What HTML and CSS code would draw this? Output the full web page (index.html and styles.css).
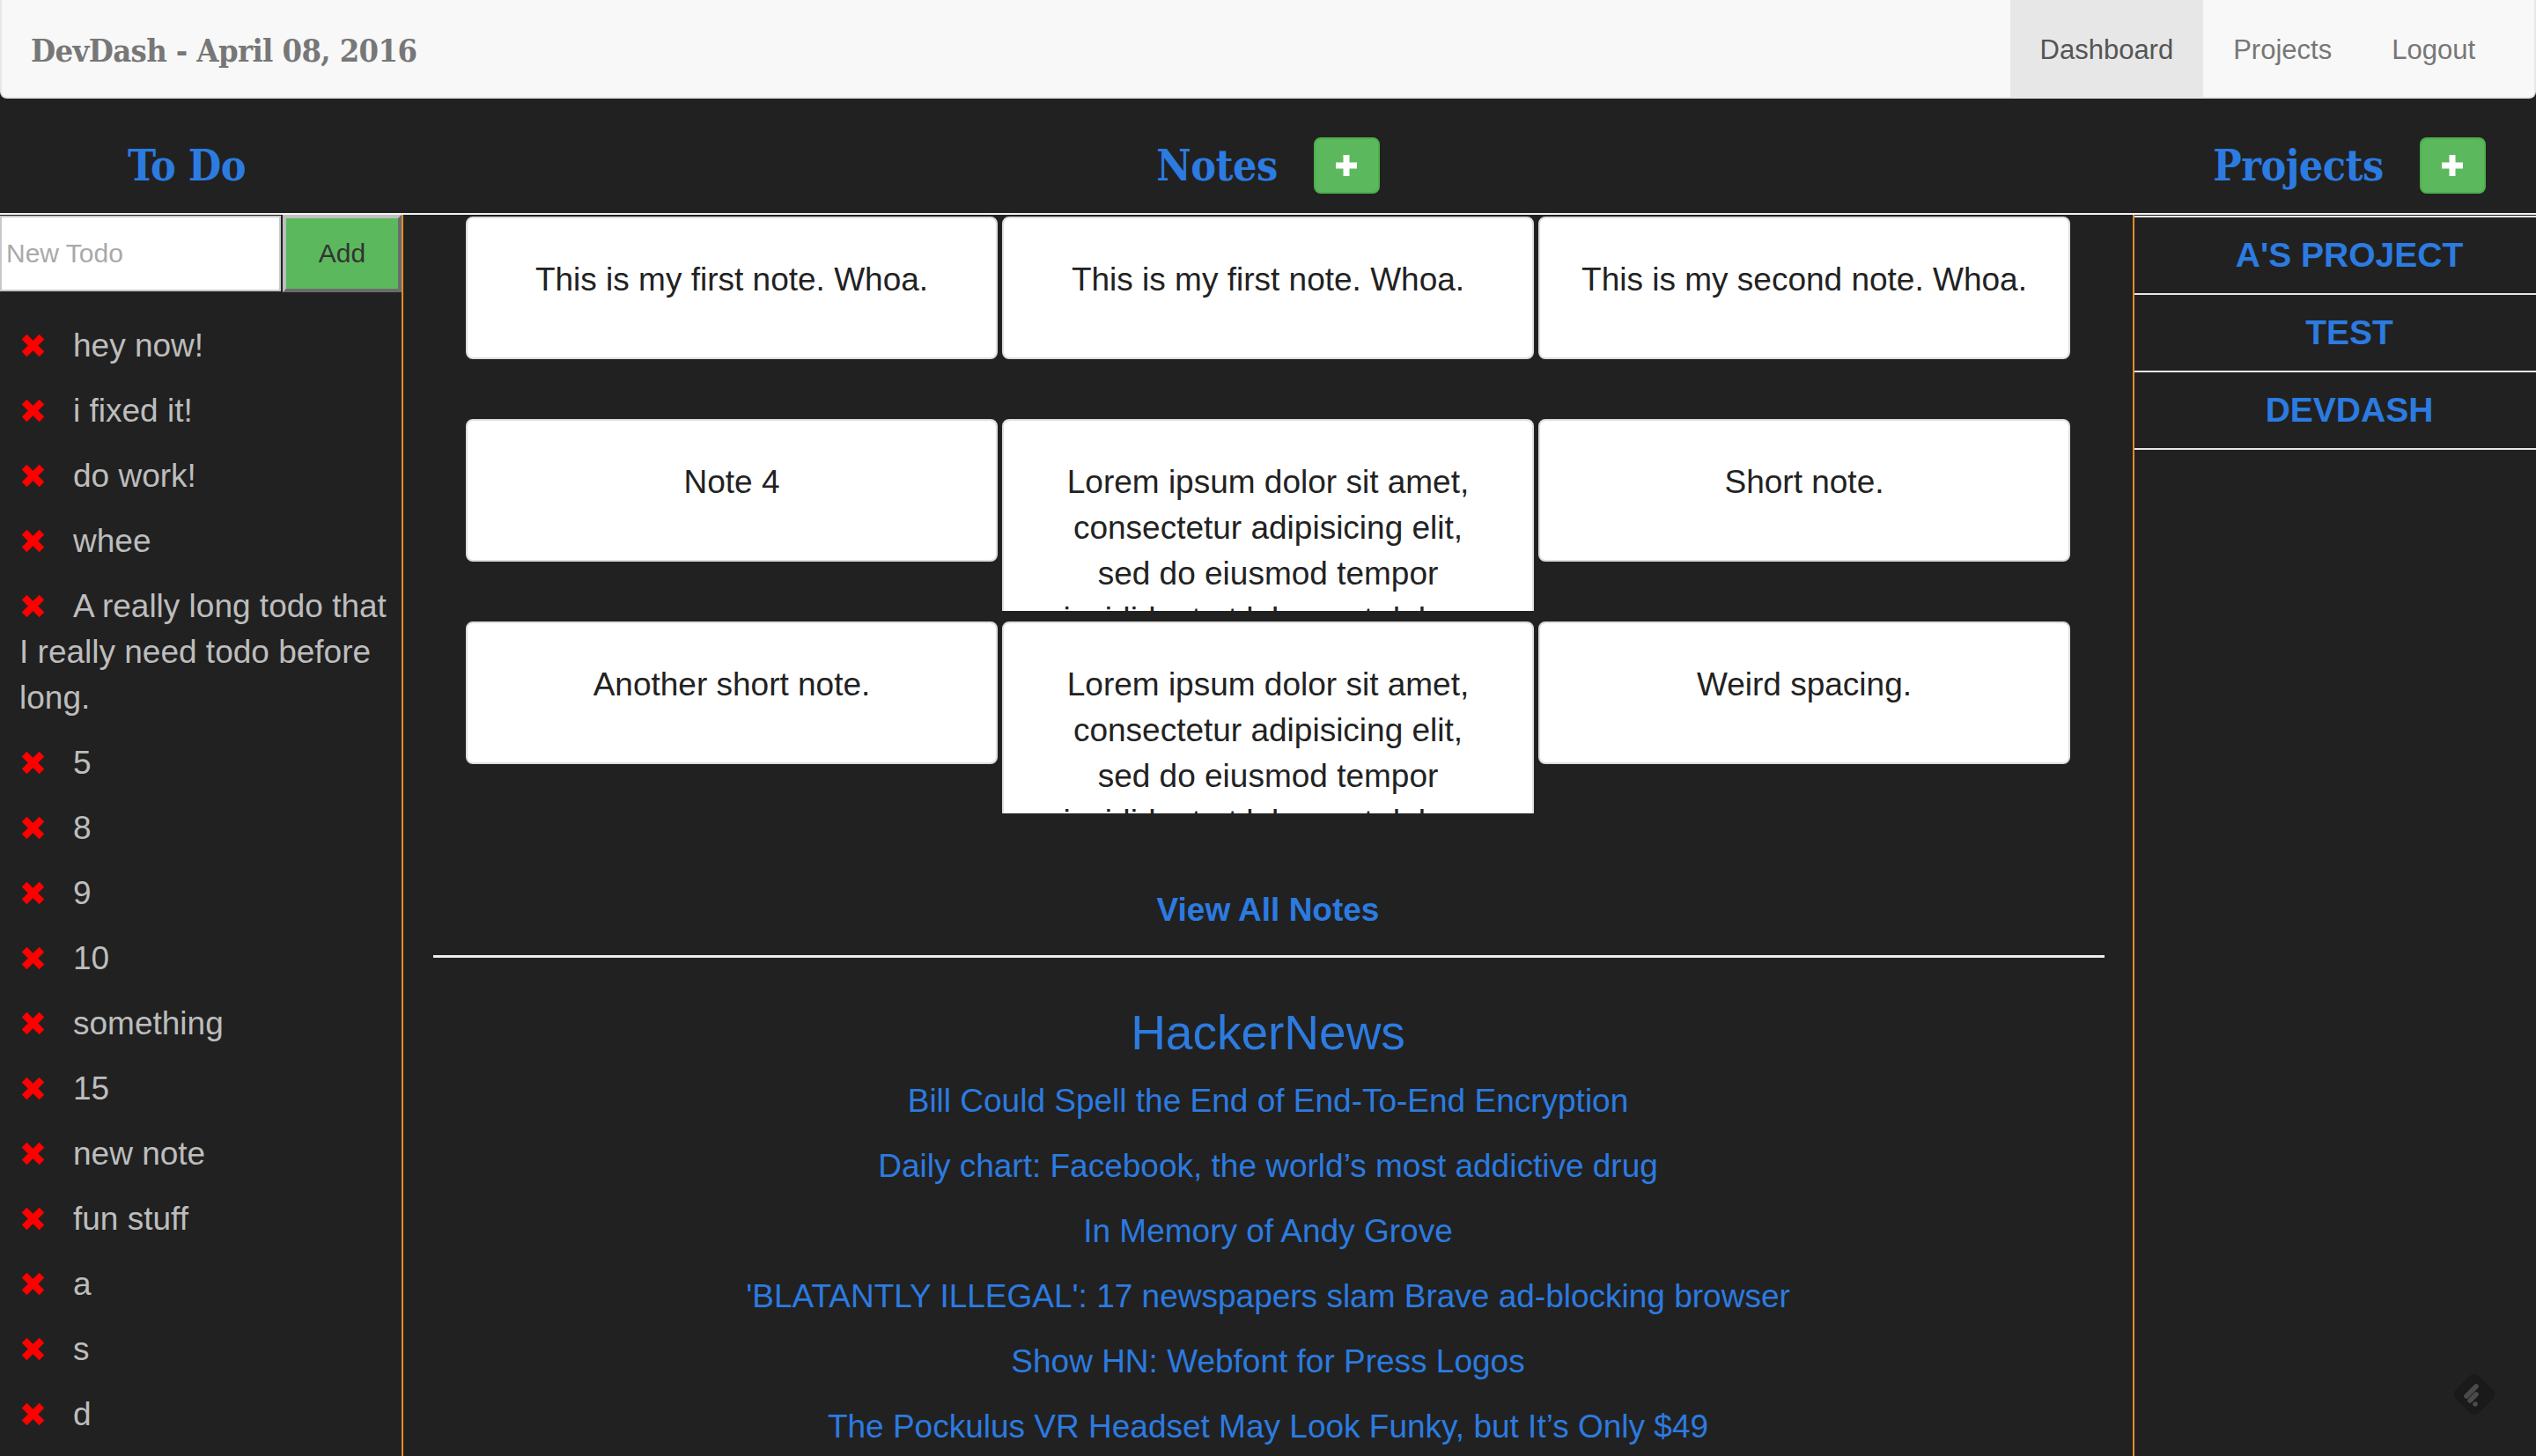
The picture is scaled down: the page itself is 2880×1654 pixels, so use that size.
FILE: index.html
```html
<!DOCTYPE html>
<html lang="en">
<head>
<meta charset="utf-8">
<title>DevDash</title>
<link rel="stylesheet" href="styles.css">
</head>
<body>
<nav class="navbar">
  <a class="brand" href="#">DevDash - April 08, 2016</a>
  <ul class="nav">
    <li class="nav-item active"><a href="#">Dashboard</a></li>
    <li class="nav-item"><a href="#">Projects</a></li>
    <li class="nav-item"><a href="#">Logout</a></li>
  </ul>
</nav>

<header class="heads">
  <div class="head"><h2 class="head-title">To Do</h2></div>
  <div class="head">
    <h2 class="head-title">Notes</h2>
    <button class="plus-btn" type="button" aria-label="Add note">
      <svg class="plus-icon" viewBox="0 0 24 24" width="24" height="24"><rect x="8.5" y="0" width="7" height="24" fill="#fff"/><rect x="0" y="8.5" width="24" height="7" fill="#fff"/></svg>
    </button>
  </div>
  <div class="head">
    <h2 class="head-title">Projects</h2>
    <button class="plus-btn" type="button" aria-label="Add project">
      <svg class="plus-icon" viewBox="0 0 24 24" width="24" height="24"><rect x="8.5" y="0" width="7" height="24" fill="#fff"/><rect x="0" y="8.5" width="24" height="7" fill="#fff"/></svg>
    </button>
  </div>
</header>

<main class="main">
  <aside class="todo">
    <form class="todo-form">
      <input class="todo-input" type="text" placeholder="New Todo">
      <button class="todo-add" type="button">Add</button>
    </form>
    <ul class="todo-list">
      <li class="todo-item"><svg class="x-icon" viewBox="0 0 25 25" width="25" height="25"><g transform="translate(12.5 12.5)" fill="#ff0000"><rect x="-4" y="-14" width="8" height="28" transform="rotate(45)"/><rect x="-4" y="-14" width="8" height="28" transform="rotate(-45)"/></g></svg>hey now!</li>
      <li class="todo-item"><svg class="x-icon" viewBox="0 0 25 25" width="25" height="25"><g transform="translate(12.5 12.5)" fill="#ff0000"><rect x="-4" y="-14" width="8" height="28" transform="rotate(45)"/><rect x="-4" y="-14" width="8" height="28" transform="rotate(-45)"/></g></svg>i fixed it!</li>
      <li class="todo-item"><svg class="x-icon" viewBox="0 0 25 25" width="25" height="25"><g transform="translate(12.5 12.5)" fill="#ff0000"><rect x="-4" y="-14" width="8" height="28" transform="rotate(45)"/><rect x="-4" y="-14" width="8" height="28" transform="rotate(-45)"/></g></svg>do work!</li>
      <li class="todo-item"><svg class="x-icon" viewBox="0 0 25 25" width="25" height="25"><g transform="translate(12.5 12.5)" fill="#ff0000"><rect x="-4" y="-14" width="8" height="28" transform="rotate(45)"/><rect x="-4" y="-14" width="8" height="28" transform="rotate(-45)"/></g></svg>whee</li>
      <li class="todo-item"><svg class="x-icon" viewBox="0 0 25 25" width="25" height="25"><g transform="translate(12.5 12.5)" fill="#ff0000"><rect x="-4" y="-14" width="8" height="28" transform="rotate(45)"/><rect x="-4" y="-14" width="8" height="28" transform="rotate(-45)"/></g></svg>A really long todo that I really need todo before long.</li>
      <li class="todo-item"><svg class="x-icon" viewBox="0 0 25 25" width="25" height="25"><g transform="translate(12.5 12.5)" fill="#ff0000"><rect x="-4" y="-14" width="8" height="28" transform="rotate(45)"/><rect x="-4" y="-14" width="8" height="28" transform="rotate(-45)"/></g></svg>5</li>
      <li class="todo-item"><svg class="x-icon" viewBox="0 0 25 25" width="25" height="25"><g transform="translate(12.5 12.5)" fill="#ff0000"><rect x="-4" y="-14" width="8" height="28" transform="rotate(45)"/><rect x="-4" y="-14" width="8" height="28" transform="rotate(-45)"/></g></svg>8</li>
      <li class="todo-item"><svg class="x-icon" viewBox="0 0 25 25" width="25" height="25"><g transform="translate(12.5 12.5)" fill="#ff0000"><rect x="-4" y="-14" width="8" height="28" transform="rotate(45)"/><rect x="-4" y="-14" width="8" height="28" transform="rotate(-45)"/></g></svg>9</li>
      <li class="todo-item"><svg class="x-icon" viewBox="0 0 25 25" width="25" height="25"><g transform="translate(12.5 12.5)" fill="#ff0000"><rect x="-4" y="-14" width="8" height="28" transform="rotate(45)"/><rect x="-4" y="-14" width="8" height="28" transform="rotate(-45)"/></g></svg>10</li>
      <li class="todo-item"><svg class="x-icon" viewBox="0 0 25 25" width="25" height="25"><g transform="translate(12.5 12.5)" fill="#ff0000"><rect x="-4" y="-14" width="8" height="28" transform="rotate(45)"/><rect x="-4" y="-14" width="8" height="28" transform="rotate(-45)"/></g></svg>something</li>
      <li class="todo-item"><svg class="x-icon" viewBox="0 0 25 25" width="25" height="25"><g transform="translate(12.5 12.5)" fill="#ff0000"><rect x="-4" y="-14" width="8" height="28" transform="rotate(45)"/><rect x="-4" y="-14" width="8" height="28" transform="rotate(-45)"/></g></svg>15</li>
      <li class="todo-item"><svg class="x-icon" viewBox="0 0 25 25" width="25" height="25"><g transform="translate(12.5 12.5)" fill="#ff0000"><rect x="-4" y="-14" width="8" height="28" transform="rotate(45)"/><rect x="-4" y="-14" width="8" height="28" transform="rotate(-45)"/></g></svg>new note</li>
      <li class="todo-item"><svg class="x-icon" viewBox="0 0 25 25" width="25" height="25"><g transform="translate(12.5 12.5)" fill="#ff0000"><rect x="-4" y="-14" width="8" height="28" transform="rotate(45)"/><rect x="-4" y="-14" width="8" height="28" transform="rotate(-45)"/></g></svg>fun stuff</li>
      <li class="todo-item"><svg class="x-icon" viewBox="0 0 25 25" width="25" height="25"><g transform="translate(12.5 12.5)" fill="#ff0000"><rect x="-4" y="-14" width="8" height="28" transform="rotate(45)"/><rect x="-4" y="-14" width="8" height="28" transform="rotate(-45)"/></g></svg>a</li>
      <li class="todo-item"><svg class="x-icon" viewBox="0 0 25 25" width="25" height="25"><g transform="translate(12.5 12.5)" fill="#ff0000"><rect x="-4" y="-14" width="8" height="28" transform="rotate(45)"/><rect x="-4" y="-14" width="8" height="28" transform="rotate(-45)"/></g></svg>s</li>
      <li class="todo-item"><svg class="x-icon" viewBox="0 0 25 25" width="25" height="25"><g transform="translate(12.5 12.5)" fill="#ff0000"><rect x="-4" y="-14" width="8" height="28" transform="rotate(45)"/><rect x="-4" y="-14" width="8" height="28" transform="rotate(-45)"/></g></svg>d</li>
    </ul>
  </aside>

  <section class="center">
    <div class="notes">
      <div class="note-cell"><div class="note">This is my first note. Whoa.</div></div>
      <div class="note-cell"><div class="note">This is my first note. Whoa.</div></div>
      <div class="note-cell"><div class="note">This is my second note. Whoa.</div></div>
      <div class="note-cell"><div class="note">Note 4</div></div>
      <div class="note-cell"><div class="note">Lorem ipsum dolor sit amet, consectetur adipisicing elit, sed do eiusmod tempor incididunt ut labore et dolore magna aliqua.</div></div>
      <div class="note-cell"><div class="note">Short note.</div></div>
      <div class="note-cell"><div class="note">Another short note.</div></div>
      <div class="note-cell"><div class="note">Lorem ipsum dolor sit amet, consectetur adipisicing elit, sed do eiusmod tempor incididunt ut labore et dolore magna aliqua.</div></div>
      <div class="note-cell"><div class="note">Weird spacing.</div></div>
    </div>
    <div class="view-all"><a href="#">View All Notes</a></div>
    <hr class="divider">
    <h3 class="hn-title">HackerNews</h3>
    <ul class="hn-list">
      <li class="hn-item"><a href="#">Bill Could Spell the End of End-To-End Encryption</a></li>
      <li class="hn-item"><a href="#">Daily chart: Facebook, the world’s most addictive drug</a></li>
      <li class="hn-item"><a href="#">In Memory of Andy Grove</a></li>
      <li class="hn-item"><a href="#">'BLATANTLY ILLEGAL': 17 newspapers slam Brave ad-blocking browser</a></li>
      <li class="hn-item"><a href="#">Show HN: Webfont for Press Logos</a></li>
      <li class="hn-item"><a href="#">The Pockulus VR Headset May Look Funky, but It’s Only $49</a></li>
    </ul>
  </section>

  <aside class="projects">
    <ul class="project-list">
      <li class="project-item"><a href="#">A's Project</a></li>
      <li class="project-item"><a href="#">Test</a></li>
      <li class="project-item"><a href="#">DevDash</a></li>
    </ul>
  </aside>
</main>

<div class="feedly" aria-hidden="true">
  <svg viewBox="0 0 56 56" width="56" height="56">
    <rect x="9.5" y="9.5" width="37" height="37" rx="7" fill="#1a1a1a" transform="rotate(45 28 28)"/>
    <g stroke="#4a4a4a" stroke-width="5.5" stroke-linecap="round" fill="none">
      <line x1="19" y1="30" x2="30" y2="19"/>
      <line x1="23" y1="35" x2="30" y2="28"/>
    </g>
    <circle cx="29" cy="39" r="2.8" fill="#4a4a4a"/>
  </svg>
</div>
</body>
</html>
```

FILE: styles.css
```css
* { box-sizing: border-box; }

html, body {
  margin: 0;
  padding: 0;
  background: #212121;
}

body {
  font-family: "Liberation Sans", Arial, Helvetica, sans-serif;
  color: #bdbdbd;
  min-height: 100vh;
}

a { text-decoration: none; }

/* ---------- navbar ---------- */
.navbar {
  display: flex;
  align-items: stretch;
  justify-content: space-between;
  height: 112px;
  background: #f8f8f8;
  border: 2px solid #e7e7e7;
  border-top: 0;
  border-radius: 0 0 8px 8px;
  padding: 0 33px 0 33px;
}

.brand {
  display: flex;
  align-items: center;
  padding-top: 4px;
  font-family: "DejaVu Serif", "Liberation Serif", serif;
  font-stretch: condensed;
  font-weight: bold;
  font-size: 36px;
  color: #777;
  letter-spacing: -0.6px;
}

.nav {
  display: flex;
  list-style: none;
  margin: 0;
  padding: 0;
}

.nav-item a {
  display: flex;
  align-items: center;
  height: 110px;
  padding: 4px 34px 0;
  font-size: 31px;
  color: #777;
}

.nav-item.active a {
  background: #e7e7e7;
  color: #555;
}

/* ---------- column headings ---------- */
.heads {
  display: grid;
  grid-template-columns: 424px 1fr 424px;
  height: 132px;
  padding-top: 44px;
  border-bottom: 2px solid #f2f2f2;
}

.head {
  display: flex;
  justify-content: center;
  align-items: center;
  gap: 41px;
  height: 64px;
}

.head-title {
  margin: 0;
  font-family: "DejaVu Serif", "Liberation Serif", serif;
  font-stretch: condensed;
  font-weight: bold;
  font-size: 48px;
  line-height: 64px;
  color: #2c7be0;
  letter-spacing: -0.5px;
}

.plus-btn {
  display: flex;
  align-items: center;
  justify-content: center;
  width: 75px;
  height: 64px;
  padding: 0;
  background: #5cb85c;
  border: 2px solid #4cae4c;
  border-radius: 8px;
}

.plus-icon { display: block; }

/* ---------- main columns ---------- */
.main {
  display: flex;
  align-items: stretch;
  min-height: calc(100vh - 244px);
}

.todo {
  flex: 0 0 458px;
  border-right: 2px solid #e38b2c;
}

.todo-form {
  display: flex;
  align-items: flex-start;
  gap: 2px;
  margin: 0;
}

.todo-input {
  width: 319px;
  height: 86px;
  margin-top: 1px;
  padding: 0 5px;
  background: #fff;
  border: 2px solid #c8c8c8;
  font-family: "Liberation Sans", Arial, sans-serif;
  font-size: 30px;
  color: #333;
  outline: none;
}

.todo-input::placeholder { color: #a9a9a9; }

.todo-add {
  width: 135px;
  height: 88px;
  padding: 0;
  background: #5cb85c;
  border-style: solid;
  border-width: 4px;
  border-color: #c0c0c0 #6b6b6b #6b6b6b #bdbdbd;
  font-family: "Liberation Sans", Arial, sans-serif;
  font-size: 30px;
  color: #333;
}

.todo-list {
  list-style: none;
  margin: 24px 0 0;
  padding: 0 6px 0 22px;
}

.todo-item {
  padding: 11px 0;
  font-size: 37px;
  line-height: 52px;
  color: #bdbdbd;
}

.x-icon {
  display: inline-block;
  margin: 0 33px 0 3px;
}

/* ---------- center ---------- */
.center {
  flex: 1 1 auto;
  min-width: 0;
}

.notes {
  display: grid;
  grid-template-columns: repeat(3, 1fr);
  grid-auto-rows: 218px;
  column-gap: 5px;
  row-gap: 12px;
  margin: 2px 71px 0;
}

.note-cell {
  max-height: 218px;
  overflow: hidden;
}

.note {
  background: #fff;
  border: 2px solid #dedede;
  border-radius: 8px;
  padding: 44px 45px 62px;
  font-size: 37px;
  line-height: 52px;
  color: #222;
  text-align: center;
}

.view-all {
  margin-top: 84px;
  text-align: center;
  font-size: 37px;
  font-weight: bold;
  line-height: 52px;
}

.view-all a { color: #2c7be0; }

.divider {
  margin: 25px 32px 0 34px;
  height: 0;
  border: 0;
  border-top: 3px solid #ececec;
}

.hn-title {
  margin: 52px 0 0;
  text-align: center;
  font-size: 55px;
  font-weight: normal;
  line-height: 66px;
  color: #2c7be0;
}

.hn-list {
  list-style: none;
  margin: 8px 0 0;
  padding: 0;
  text-align: center;
}

.hn-item {
  padding: 11px 0;
  font-size: 37px;
  line-height: 52px;
}

.hn-item a { color: #2c7be0; }

/* ---------- projects ---------- */
.projects {
  flex: 0 0 458px;
  border-left: 2px solid #e38b2c;
  padding-top: 1px;
}

.project-list {
  list-style: none;
  margin: 0;
  padding: 0;
  border-top: 2px solid #e8e8e8;
}

.project-item {
  display: flex;
  align-items: center;
  justify-content: center;
  height: 88px;
  padding-left: 32px;
  border-bottom: 2px solid #e8e8e8;
  font-size: 39px;
  font-weight: bold;
  text-transform: uppercase;
}

.project-item a { color: #2c7be0; }

/* ---------- feedly extension badge ---------- */
.feedly {
  position: fixed;
  right: 42px;
  bottom: 42px;
  width: 56px;
  height: 56px;
}

.feedly svg { display: block; }
```
